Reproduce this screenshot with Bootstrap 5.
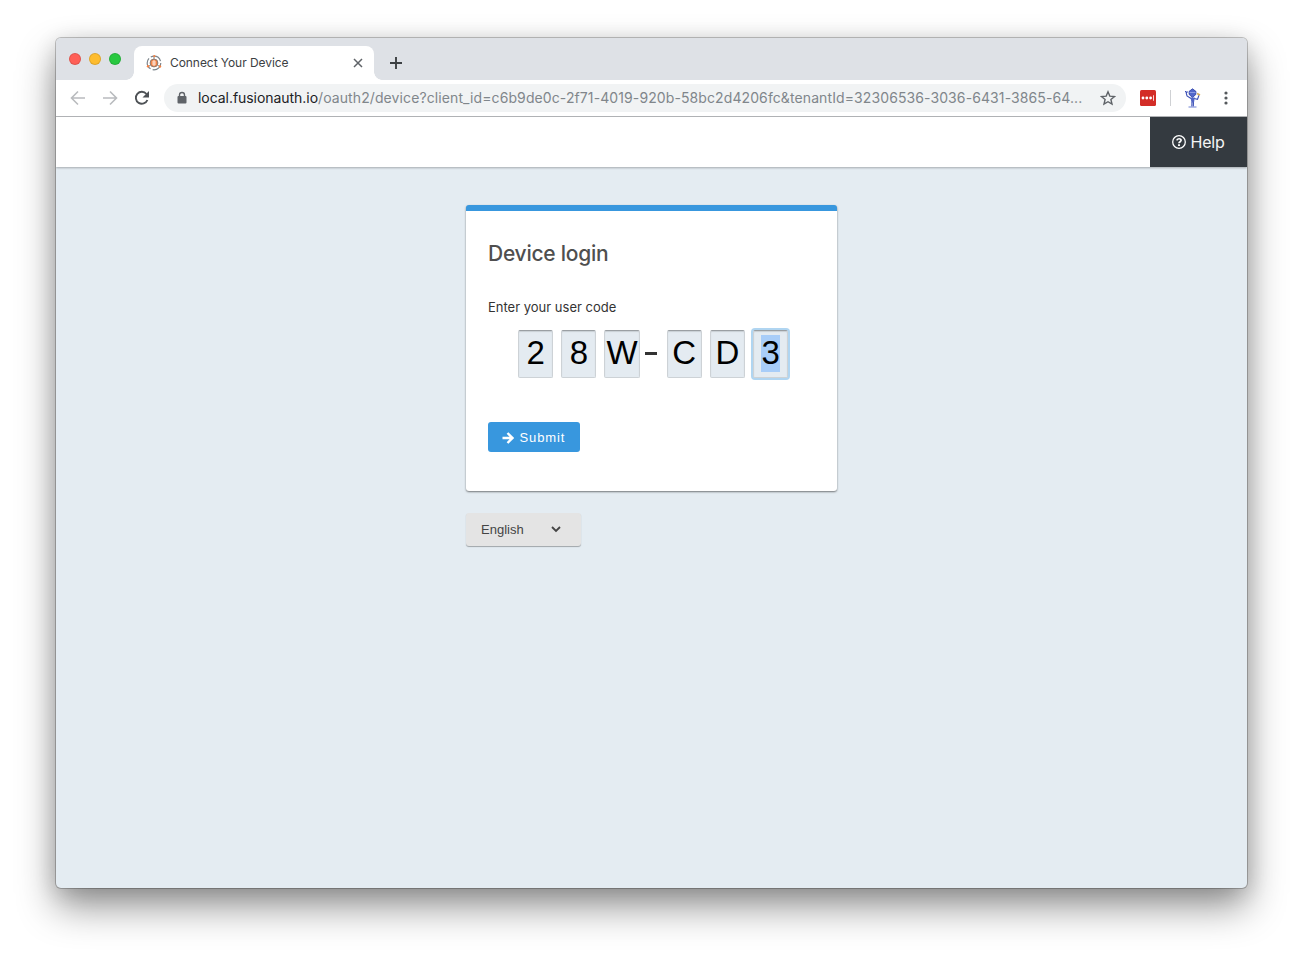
<!DOCTYPE html>
<html lang="en">
<head>
<meta charset="utf-8">
<meta name="viewport" content="width=device-width, initial-scale=1">
<title>Connect Your Device</title>
<link href="https://cdn.jsdelivr.net/npm/bootstrap@5.3.0/dist/css/bootstrap.min.css" rel="stylesheet">
<style>
body{background:#fff;font-family:Inter,"Liberation Sans",sans-serif;height:962px;overflow:hidden;padding:38px 56px 74px}
svg{display:block;flex:none}
.window{height:850px;border-radius:5px;background:#e4ecf2;box-shadow:0 0 0 1px rgba(0,0,0,.22),0 19px 38px rgba(0,0,0,.42),0 4px 22px rgba(0,0,0,.14)}
.window-inner{border-radius:5px;overflow:hidden;height:100%}
.tabstrip{height:42px;background:#dee1e6;padding-left:13px}
.light{width:12px;height:12px;border-radius:50%;margin-right:8px;margin-top:15px;border:1px solid rgba(0,0,0,.12)}
.tab{width:240px;height:34px;margin-top:8px;margin-left:5px;background:#fff;border-radius:8px 8px 0 0;padding:0 11px 0 12px;font:12px/34px Inter,sans-serif;letter-spacing:-.06px;color:#3c4043;position:relative}
.tab::before,.tab::after{content:"";position:absolute;bottom:0;width:8px;height:8px}
.tab::before{left:-8px;background:radial-gradient(circle at 0 0,transparent 7.5px,#fff 8px)}
.tab::after{right:-8px;background:radial-gradient(circle at 100% 0,transparent 7.5px,#fff 8px)}
.toolbar{height:37px;background:#fff;border-bottom:1px solid #b4b6b9;padding-left:14px}
.omnibox{width:962px;height:28px;border-radius:14px;background:#f1f3f4;font:14px/28px Inter,sans-serif;color:#80868b;padding:0 10px 0 12px;margin-left:14px}
.url{letter-spacing:.1px;white-space:nowrap}
.url b{font-weight:400;color:#202124;letter-spacing:-.05px}
.sitebar{height:50px;background:#fff;box-shadow:0 1px 2px rgba(0,0,0,.28);position:relative}
.help{width:97px;background:#343a40;color:#f5f5f5;font:16px/50px Inter,sans-serif;letter-spacing:-.2px}
.main-col{width:371px;margin:38px auto 0 410px}
.panel{height:286px;background:#fff;border-top:6px solid #3897de;border-radius:3px;padding:0 22px;box-shadow:0 1px 2px rgba(0,0,0,.5)}
.panel h1{font:500 21px/26px Inter,sans-serif;letter-spacing:-.25px;color:#4f4f4f;margin:0;padding-top:30px;height:84px}
.panel label{font:13px/24px Inter,sans-serif;color:#333;letter-spacing:0;display:block}
.codes{margin:11px 0 0 30px;height:48px;font-family:"Liberation Sans",sans-serif}
.digit{width:35.3px;height:48px;margin-right:7.9px;background:#e4ebf1;border:1px solid #cdd2d6;border-top-color:#9a9fa3;border-radius:2px;box-shadow:inset 0 1px 1px rgba(0,0,0,.12);font-size:33px;line-height:43px;color:#000}
.digit.active{box-shadow:0 0 0 2px #b0d5f1,inset 0 1px 1px rgba(0,0,0,.12)}
.digit.active span{background:#a8cdf8;height:37px;line-height:35px;margin-top:4px}
.dash{width:12px;height:3px;background:#333;margin:22px 10px 0 -3px}
.submit{width:92px;height:30px;border:0;border-radius:3px;background:#3897de;color:#fff;font:13px/30px "Liberation Sans",sans-serif;letter-spacing:.9px;margin-top:44px;padding:1px 0 0 14px;gap:5.5px}
.lang{width:115px;height:33px;margin-top:22px;background:#e4e4e4;border-radius:3px;box-shadow:0 1px 1px rgba(0,0,0,.3);font:13px/32px "Liberation Sans",sans-serif;color:#444;padding:0 20px 0 15px}
</style>
</head>
<body>
<div class="window"><div class="window-inner">
  <div class="tabstrip d-flex">
    <span class="light" style="background:#ff5f57"></span><span class="light" style="background:#febc2e"></span><span class="light" style="background:#28c840"></span>
    <div class="tab d-flex align-items-center">
      <svg width="16" height="16" viewBox="0 0 16 16" fill="none"><circle cx="8" cy="8" r="6.800" stroke="#7b848c" stroke-width="1.200" stroke-dasharray="12 2.240"/><path d="M8 4V1.500M11.500 10l2 1.500M4.500 10l-2 1.500" stroke="#7b848c"/><circle cx="8" cy="8" r="3.900" fill="#f58345" stroke="#8b7c75"/><path d="M7 6h2v4H7zM7 8h2" stroke="#fff" stroke-width=".8"/><circle cx="8.300" cy="1.200" r="1.100" fill="#f58345"/><circle cx="14" cy="11.500" r="1.200" fill="#f58345"/><circle cx="2" cy="11.300" r="1.200" fill="#f58345"/></svg>
      <span class="ms-2 flex-grow-1">Connect Your Device</span>
      <svg width="10" height="10" viewBox="0 0 10 10" stroke="#5f6368" stroke-width="1.500"><path d="m1 1 8 8M9 1 1 9"/></svg>
    </div>
    <svg class="ms-3" style="margin-top:19px" width="12" height="12" viewBox="0 0 12 12" stroke="#3c4043" stroke-width="1.900"><path d="M6 0v12M0 6h12"/></svg>
  </div>
  <div class="toolbar d-flex align-items-center">
    <svg width="16" height="16" viewBox="0 0 16 16" fill="none" stroke="#b9bbbe" stroke-width="1.600"><path d="M15 8H2M8 1.500 1.500 8 8 14.500"/></svg>
    <svg style="margin-left:16px" width="16" height="16" viewBox="0 0 16 16" fill="none" stroke="#b9bbbe" stroke-width="1.600"><path d="M1 8h13M8 1.500 14.500 8 8 14.500"/></svg>
    <svg style="margin-left:16px" width="16" height="16" viewBox="0 0 16 16" fill="none"><path d="M13.400 10A6 6 0 1 1 12.500 4" stroke="#4e5256" stroke-width="1.900"/><path d="M15 1v6.500H8.500z" fill="#4e5256"/></svg>
    <div class="omnibox d-flex align-items-center">
      <svg width="12" height="14" viewBox="0 0 12 14"><path d="M3.500 6V4a2.500 2.500 0 0 1 5 0v2" fill="none" stroke="#5f6368" stroke-width="1.400"/><rect x="1.500" y="5" width="9" height="7.500" rx="1" fill="#5f6368"/></svg>
      <span class="url flex-grow-1" style="margin-left:10px"><b>local.fusionauth.io</b>/oauth2/device?client_id=c6b9de0c-2f71-4019-920b-58bc2d4206fc&amp;tenantId=32306536-3036-6431-3865-64...</span>
      <svg width="16" height="16" viewBox="0 0 16 16" fill="none" stroke="#5f6368" stroke-width="1.400"><path d="m8 1.800 1.800 4.300 4.700.4-3.600 3 1.100 4.600L8 11.700l-4 2.400 1.100-4.600-3.600-3 4.700-.4z"/></svg>
    </div>
    <svg style="margin-left:14px" width="16" height="16" viewBox="0 0 16 16"><rect width="16" height="16" rx="1.500" fill="#d32d27"/><g fill="#fff"><circle cx="3" cy="8" r="1.400"/><circle cx="6.800" cy="8" r="1.400"/><circle cx="10.600" cy="8" r="1.400"/><path d="M13 5.300h.8v5.400H13z"/></g></svg>
    <span style="width:1px;height:16px;background:#cfd1d4;margin-left:14px"></span>
    <svg style="margin-left:13px" width="18" height="20" viewBox="0 0 18 20" fill="none"><path d="M5 3.500 8.500.8 12 3.500 11.800 6.500 8.500 9.500 5.200 6.500z" fill="#5368c9" stroke="#273ba5" stroke-width=".8"/><path d="M5.500 4.500h6" stroke="#8d9ce4"/><path d="M8 14 7.800 18.500M9.500 13.500l-.2 5M7 10.500 3 8 2 4M10 10.500l3.500.8 1.500-4" stroke="#3d51b7" stroke-width="1.100"/><path d="M6.500 9.500h4.300L10 14.500H7.500z" fill="#5266c5"/><path d="M4.500 19h8" stroke="#7182d2" stroke-width="1.200"/><path d="m13 5.500 3 1.500" stroke="#d5ad59" stroke-width="1.700"/><path d="m1 3 2 2M3 3v2" stroke="#3d51b7"/></svg>
    <svg style="margin-left:21.500px" width="4" height="14" viewBox="0 0 4 14" fill="#55595d"><circle cx="2" cy="2" r="1.600"/><circle cx="2" cy="7" r="1.600"/><circle cx="2" cy="12" r="1.600"/></svg>
  </div>
  <div class="sitebar d-flex justify-content-end">
    <div class="help d-flex align-items-center justify-content-center gap-1">
      <svg width="14" height="14" viewBox="0 0 14 14" fill="none" stroke="#fff"><circle cx="7" cy="7" r="6.300" stroke-width="1.300"/><path d="M4.900 5.400C5.100 3.300 9.100 3.200 9.100 5.300 9.100 6.700 7 6.700 7 8.300" stroke-width="1.700"/><path d="M7 9.300v1.700" stroke-width="1.900"/></svg>
      <span>Help</span>
    </div>
  </div>
  <div class="main-col">
    <div class="panel">
      <h1>Device login</h1>
      <label>Enter your user code</label>
      <div class="codes d-flex">
        <span class="digit d-flex justify-content-center">2</span><span class="digit d-flex justify-content-center">8</span><span class="digit d-flex justify-content-center">W</span>
        <span class="dash"></span>
        <span class="digit d-flex justify-content-center">C</span><span class="digit d-flex justify-content-center">D</span><span class="digit active d-flex justify-content-center"><span>3</span></span>
      </div>
      <button class="submit d-flex align-items-center" type="button">
        <svg width="12" height="12" viewBox="0 0 12 12" fill="none" stroke="#fff" stroke-width="2.400"><path d="M.5 6h9.500M5.500 1l5 5-5 5"/></svg><span>Submit</span>
      </button>
    </div>
    <div class="lang d-flex align-items-center justify-content-between">English
      <svg width="10" height="7" viewBox="0 0 10 7" fill="none" stroke="#444" stroke-width="1.800"><path d="m1 1 4 4 4-4"/></svg>
    </div>
  </div>
</div></div>
<script src="https://cdn.jsdelivr.net/npm/bootstrap@5.3.0/dist/js/bootstrap.bundle.min.js"></script>
</body>
</html>
